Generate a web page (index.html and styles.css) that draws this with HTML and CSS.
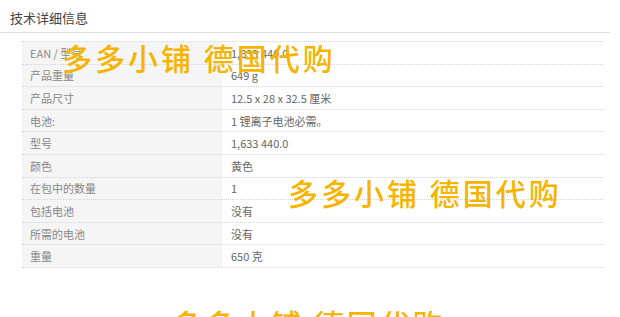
FILE: index.html
```html
<!DOCTYPE html>
<html lang="zh">
<head>
<meta charset="utf-8">
<link rel="stylesheet" href="styles.css">
</head>
<body>
<div class="page">
  <h2 class="title">技术详细信息</h2>
  <table class="specs">
    <tr><th>EAN / 型号</th><td>1,633 440.0</td></tr>
    <tr><th>产品重量</th><td>649 g</td></tr>
    <tr><th>产品尺寸</th><td>12.5 x 28 x 32.5 厘米</td></tr>
    <tr><th>电池:</th><td>1 锂离子电池必需。</td></tr>
    <tr><th>型号</th><td>1,633 440.0</td></tr>
    <tr><th>颜色</th><td>黄色</td></tr>
    <tr><th>在包中的数量</th><td>1</td></tr>
    <tr><th>包括电池</th><td>没有</td></tr>
    <tr><th>所需的电池</th><td>没有</td></tr>
    <tr><th>重量</th><td>650 克</td></tr>
  </table>
  <div class="wm wm1">多多小铺 德国代购</div>
  <div class="wm wm2">多多小铺 德国代购</div>
  <div class="wm wm3">多多小铺 德国代购</div>
</div>
</body>
</html>
```
FILE: styles.css
```css
html, body {
  margin: 0;
  padding: 0;
  background: #fff;
}
.page {
  position: relative;
  width: 620px;
  height: 317px;
  overflow: hidden;
  font-family: "Noto Sans CJK SC", "Liberation Sans", sans-serif;
}
.title {
  margin: 0 10px 0 0;
  padding: 9px 0 0 10px;
  height: 23px;
  font-size: 13px;
  font-weight: normal;
  color: #444;
  line-height: 18px;
  border-bottom: 1px solid #dcdcdc;
}
.specs {
  margin: 8px 0 0 22px;
  width: 581px;
  border-collapse: collapse;
  font-size: 11px;
  color: #777;
}
.specs tr {
  height: 22.6px;
  border-top: 1px dotted #d4d4d4;
}
.specs tr:last-child {
  border-bottom: 1px dotted #d4d4d4;
}
.specs th {
  width: 200px;
  box-sizing: border-box;
  padding: 0 0 0 8px;
  text-align: left;
  font-weight: normal;
  background: #f5f5f5;
  color: #888;
}
.specs td {
  padding: 0 0 0 9px;
  color: #666;
}
.wm {
  position: absolute;
  font-size: 30px;
  line-height: 34px;
  letter-spacing: 3px;
  color: #f6b400;
  white-space: nowrap;
  font-family: "Noto Sans CJK SC", sans-serif;
  font-weight: 500;
}
.wm1 { left: 62px; top: 40px; }
.wm2 { left: 288px; top: 175px; }
.wm3 { left: 172px; top: 306px; }
```
